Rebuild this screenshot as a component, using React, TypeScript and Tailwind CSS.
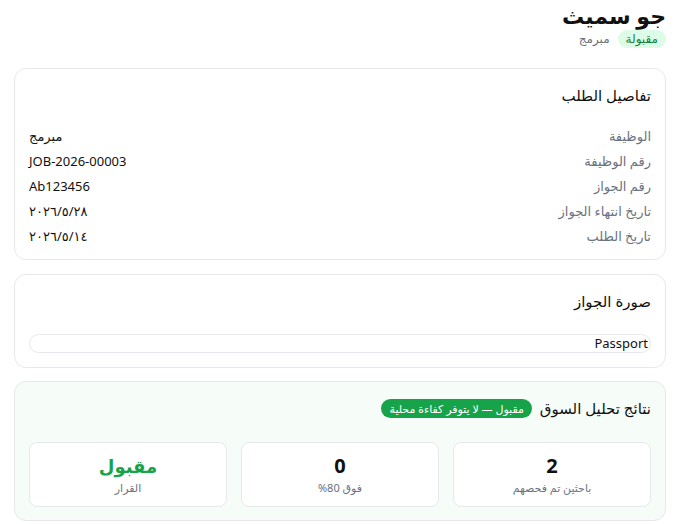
import React from "react";

const rows: [string, string][] = [
  ["الوظيفة", "مبرمج"],
  ["رقم الوظيفة", "JOB-2026-00003"],
  ["رقم الجواز", "Ab123456"],
  ["تاريخ انتهاء الجواز", "٢٠٢٦/٥/٢٨"],
  ["تاريخ الطلب", "٢٠٢٦/٥/١٤"],
];

const stats = [
  { value: "2", label: "باحثين تم فحصهم", green: false },
  { value: "0", label: "فوق 80%", green: false },
  { value: "مقبول", label: "القرار", green: true },
];

function Card({ children, className = "" }: { children: React.ReactNode; className?: string }) {
  return (
    <div className={"rounded-xl border border-[#e6e8eb] px-[14px] " + className}>{children}</div>
  );
}

export default function App() {
  return (
    <div
      dir="rtl"
      className="min-h-screen bg-white px-[14px] pb-4 text-[#111]"
      style={{ fontFamily: '"Noto Sans", "DejaVu Sans", sans-serif' }}
    >
      <div>
        <h1 className="text-[22px] font-bold leading-[30px]">جو سميث</h1>
        <div className="flex items-center gap-2">
          <span className="rounded-full bg-[#dcfce7] px-2 text-xs leading-[18px] text-[#15803d]">مقبولة</span>
          <span className="text-xs leading-[18px] text-[#6b7280]">مبرمج</span>
        </div>
      </div>

      <Card className="mt-5 pt-[14px] pb-2.5 bg-white">
        <h2 className="text-[15px] leading-6">تفاصيل الطلب</h2>
        <div className="mt-[17px] flex flex-col">
          {rows.map(([label, value]) => (
            <div key={label} className="flex h-[25px] items-center justify-between text-[13px]">
              <span className="text-[#6b7280]">{label}</span>
              <span>{value}</span>
            </div>
          ))}
        </div>
      </Card>

      <Card className="mt-[14px] pt-[14px] pb-[14px] bg-white">
        <h2 className="text-[15px] leading-6">صورة الجواز</h2>
        <div className="mt-[21px] flex h-[19px] items-center rounded-full border border-[#e6e8eb] px-[2px] text-[13px]">
          Passport
        </div>
      </Card>

      <Card className="mt-[13px] pt-[14px] pb-[13px] bg-[#f6fcf8] border-[#e3efe7]">
        <div className="flex items-center gap-2">
          <h2 className="text-[15px] leading-6">نتائج تحليل السوق</h2>
          <span className="rounded-full bg-[#16a34a] px-2 text-[11px] leading-[19px] text-white">
            مقبول — لا يتوفر كفاءة محلية
          </span>
        </div>
        <div className="mt-[22px] grid grid-cols-3 gap-[14px]">
          {stats.map((s) => (
            <div
              key={s.label}
              className="flex h-[65px] flex-col items-center justify-center rounded-lg border border-[#e6e8eb] bg-white"
            >
              <span className={"font-bold leading-7 " + (s.green ? "text-[18px] text-[#16a34a]" : "text-xl")}>
                {s.value}
              </span>
              <span className="text-[11px] text-[#6b7280]">{s.label}</span>
            </div>
          ))}
        </div>
      </Card>
    </div>
  );
}
